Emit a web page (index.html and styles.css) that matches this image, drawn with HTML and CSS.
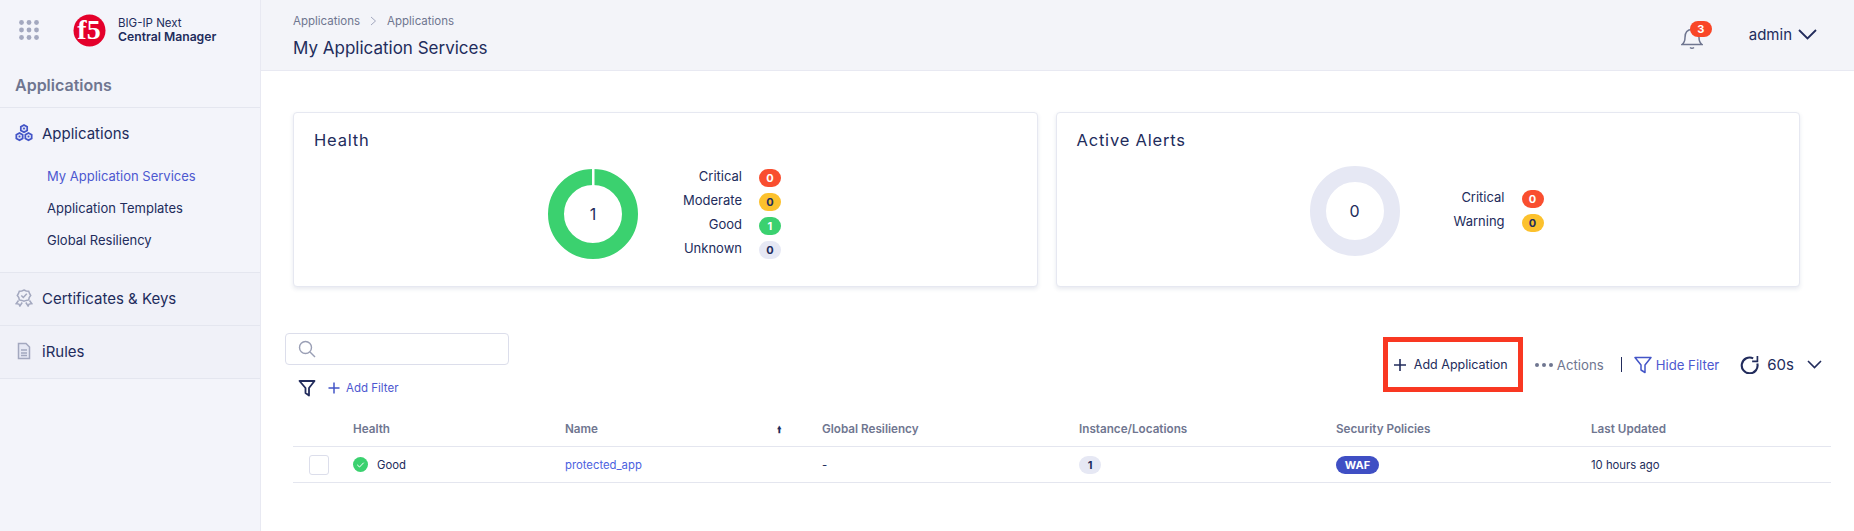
FILE: index.html
```html
<!DOCTYPE html>
<html lang="en">
<head>
  <meta charset="UTF-8" />
  <title>My Application Services</title>
  <link rel="stylesheet" href="styles.css">
</head>
<body>

  <div class="sidebar">
    <div class="brand">
      <svg class="apps-grid" width="20" height="20" viewBox="0 0 20 20">
        <g fill="#a3a8bf">
          <circle cx="2.500" cy="2.500" r="2.400"/><circle cx="10" cy="2.500" r="2.400"/><circle cx="17.500" cy="2.500" r="2.400"/>
          <circle cx="2.500" cy="10" r="2.400"/><circle cx="10" cy="10" r="2.400"/><circle cx="17.500" cy="10" r="2.400"/>
          <circle cx="2.500" cy="17.500" r="2.400"/><circle cx="10" cy="17.500" r="2.400"/><circle cx="17.500" cy="17.500" r="2.400"/>
        </g>
      </svg>
      <svg class="f5-logo" width="33" height="33" viewBox="0 0 33 33">
        <circle cx="16.500" cy="16.500" r="16" fill="#e4002b"/>
        <text x="16" y="25" text-anchor="middle" class="f5-text">f5</text>
      </svg>
      <div class="brand-name">
        <div class="brand-top">BIG-IP Next</div>
        <div class="brand-bottom">Central Manager</div>
      </div>
    </div>

    <div class="side-title">Applications</div>

    <div class="nav-group">
      <div class="nav-item">
        <svg width="18" height="18" viewBox="0 0 18 18" fill="#dfe2f5" stroke="#4355c7" stroke-width="1.700">
          <path d="M9 1l3.200 1.800v3.600L9 8.200 5.800 6.400V2.800z"/>
          <path d="M4.500 9l3.200 1.800v3.600L4.500 16.200 1.300 14.400v-3.600z"/>
          <path d="M13.500 9l3.200 1.800v3.600l-3.200 1.800-3.200-1.800v-3.600z"/>
          <circle cx="9" cy="4.600" r="1" fill="#4355c7" stroke="none"/>
          <circle cx="4.500" cy="12.600" r="1" fill="#4355c7" stroke="none"/>
          <circle cx="13.500" cy="12.600" r="1" fill="#4355c7" stroke="none"/>
        </svg>
        <span>Applications</span>
      </div>
      <a class="sub-item active">My Application Services</a>
      <a class="sub-item">Application Templates</a>
      <a class="sub-item">Global Resiliency</a>
    </div>

    <div class="nav-item nav-row">
      <svg width="18" height="18" viewBox="0 0 18 18" fill="none" stroke="#a3a8bf" stroke-width="1.500">
        <path d="M9 1l2.200 1 2.500.2.800 2.300 1.200 2-1.500 2-.5 2.400-2.500.5L9 12.300l-2.200-.9-2.500-.5-.5-2.400-1.500-2 1.200-2 .8-2.300 2.500-.2z"/>
        <path d="M6.300 6.500l2 2 3.500-3.800"/>
        <path d="M3.500 11.500l-2.300 3.200 2.700.4 1 1.900 2.300-3.500M14.500 11.500l2.300 3.200-2.700.4-1 1.900-2.300-3.500"/>
      </svg>
      <span>Certificates &amp; Keys</span>
    </div>

    <div class="nav-item nav-row">
      <svg width="18" height="18" viewBox="0 0 18 18" fill="#e6e8f4" stroke="#a3a8bf" stroke-width="1.500">
        <path d="M3.500 1.500h7.500l3.500 3.500v11.500h-11z"/>
        <path d="M6 8h6M6 11h6M6 13.500h6"/>
      </svg>
      <span>iRules</span>
    </div>
  </div>

  <div class="main">
    <div class="topbar">
      <div>
        <div class="crumbs">
          <span>Applications</span>
          <svg width="7" height="10" viewBox="0 0 7 10" fill="none" stroke="#a3a8bf" stroke-width="1"><path d="M1 1l4.500 4L1 9"/></svg>
          <span>Applications</span>
        </div>
        <h1>My Application Services</h1>
      </div>
      <div class="top-right">
        <div class="bell">
          <svg width="22" height="24" viewBox="0 0 22 24" fill="none" stroke="#6f7690" stroke-width="1.500">
            <path d="M1 18.500c2-1.500 3-3.500 3-7 0-5 2.500-8 7-8s7 3 7 8c0 3.500 1 5.500 3 7z"/>
            <path d="M9 21.500c1.200 1 2.800 1 4 0"/>
          </svg>
          <span class="bell-count">3</span>
        </div>
        <span class="user">admin</span>
        <svg class="user-arrow" width="19" height="11" viewBox="0 0 19 11" fill="none" stroke="#222c5c" stroke-width="1.800"><path d="M1 1l8.500 8.500L18 1"/></svg>
      </div>
    </div>

    <div class="content">
      <div class="cards">
        <div class="card">
          <div class="card-title">Health</div>
          <div class="chart chart-health">
            <div class="donut">
              <svg width="90" height="90" viewBox="0 0 90 90">
                <circle cx="45" cy="45" r="37" fill="none" stroke="#3bd16f" stroke-width="16"/>
                <rect x="44" y="0" width="2.500" height="17" fill="#fff"/>
              </svg>
              <span>1</span>
            </div>
            <div class="legend">
              <span>Critical</span><b class="badge red">0</b>
              <span>Moderate</span><b class="badge yellow">0</b>
              <span>Good</span><b class="badge green">1</b>
              <span>Unknown</span><b class="badge grey">0</b>
            </div>
          </div>
        </div>
        <div class="card">
          <div class="card-title">Active Alerts</div>
          <div class="chart chart-alerts">
            <div class="donut">
              <svg width="90" height="90" viewBox="0 0 90 90">
                <circle cx="45" cy="45" r="37" fill="none" stroke="#e6e8f4" stroke-width="16"/>
              </svg>
              <span>0</span>
            </div>
            <div class="legend">
              <span>Critical</span><b class="badge red">0</b>
              <span>Warning</span><b class="badge yellow">0</b>
            </div>
          </div>
        </div>
      </div>

      <div class="toolbar">
        <div class="filters">
          <div class="search">
            <svg width="18" height="18" viewBox="0 0 18 18" fill="none" stroke="#9a9fb5" stroke-width="1.400">
              <circle cx="7.500" cy="7.500" r="6"/><path d="M12 12l5 5"/>
            </svg>
          </div>
          <div class="filter-row">
            <svg width="18" height="18" viewBox="0 0 18 18" fill="none" stroke="#222c5c" stroke-width="1.800" stroke-linejoin="round">
              <path d="M1.500 2h15l-5.500 7v7.500L7.500 14V9z"/>
            </svg>
            <svg class="plus" width="12" height="12" viewBox="0 0 12 12" stroke="#4355c7" stroke-width="1.500"><path d="M6 0.500v11M0.500 6h11"/></svg>
            <span>Add Filter</span>
          </div>
        </div>

        <div class="actions">
          <div class="add-app">
            <svg width="14" height="14" viewBox="0 0 14 14" stroke="#222c5c" stroke-width="1.600"><path d="M7 1v12M1 7h12"/></svg>
            <span>Add Application</span>
          </div>
          <div class="dots"><i></i><i></i><i></i></div>
          <span class="action-grey">Actions</span>
          <span class="sep"></span>
          <svg width="18" height="18" viewBox="0 0 18 18" fill="none" stroke="#4355c7" stroke-width="1.500" stroke-linejoin="round">
            <path d="M1 1.500h16l-6 7.500v7.500L7 14V9z"/>
          </svg>
          <span class="action-blue">Hide Filter</span>
          <svg class="refresh" width="19" height="19" viewBox="0 0 18 18" fill="none" stroke="#222c5c" stroke-width="2">
            <path d="M12.500 3.200A7.500 7.500 0 1 0 16.400 8"/><path d="M16.500 1v5h-5" stroke-width="1.600"/>
          </svg>
          <span class="interval">60s</span>
          <svg width="15" height="9" viewBox="0 0 15 9" fill="none" stroke="#222c5c" stroke-width="1.600"><path d="M1 1l6.500 6.500L14 1"/></svg>
        </div>
      </div>

      <div class="table">
        <div class="tr th">
          <div></div>
          <div>Health</div>
          <div class="name-head">Name <span class="sort">&#129049;</span></div>
          <div>Global Resiliency</div>
          <div>Instance/Locations</div>
          <div>Security Policies</div>
          <div>Last Updated</div>
        </div>
        <div class="tr td">
          <div><span class="checkbox"></span></div>
          <div class="health-cell">
            <svg width="15" height="15" viewBox="0 0 15 15">
              <circle cx="7.500" cy="7.500" r="7.500" fill="#3bd16f"/>
              <path d="M4.200 7.800l2.300 2.200 4.200-4.300" fill="none" stroke="#fff" stroke-width="1"/>
            </svg>
            Good
          </div>
          <div><a class="app-link">protected_app</a></div>
          <div>-</div>
          <div><span class="count">1</span></div>
          <div><span class="waf">WAF</span></div>
          <div>10 hours ago</div>
        </div>
      </div>
    </div>
  </div>

</body>
</html>
```

FILE: styles.css
```css
* {
  box-sizing: border-box;
}

body {
  font-family: 'Inter', 'Liberation Sans', sans-serif;
  background-color: white;
  color: #222c5c;
  margin: 0;
  height: 531px;
  display: flex;
  overflow: hidden;
}

/* sidebar */

.sidebar {
  width: 261px;
  flex-shrink: 0;
  background-color: #f3f4fa;
  border-right: 1px solid #e8e9f2;
}

.brand {
  height: 60px;
  display: flex;
  align-items: center;
  padding-left: 19px;
}

.f5-logo {
  margin-left: 34px;
}

.f5-text {
  font-family: 'Liberation Serif', serif;
  font-size: 28px;
  font-weight: bold;
  fill: white;
}

.brand-name {
  margin-left: 12px;
  font-size: 11.500px;
  line-height: 14px;
}

.brand-bottom {
  font-weight: 600;
  font-size: 12.200px;
}

.side-title {
  height: 48px;
  padding: 15px 0 0 15px;
  font-size: 16px;
  font-weight: 600;
  color: #6f7690;
  border-bottom: 1px solid #e4e6ef;
}

.nav-group {
  height: 165px;
  border-bottom: 1px solid #e4e6ef;
}

.nav-item {
  display: flex;
  align-items: center;
  gap: 9px;
  height: 53px;
  padding: 0 0 2px 15px;
  font-size: 15px;
}

.nav-group .nav-item {
  height: 52px;
}

.nav-row {
  background-color: #f0f1f8;
  border-bottom: 1px solid #e4e6ef;
}

.sub-item {
  display: block;
  height: 32px;
  line-height: 32px;
  padding-left: 47px;
  font-size: 13px;
}

.sub-item.active {
  color: #4d58d0;
}

/* top bar */

.main {
  flex: 1;
  min-width: 0;
}

.topbar {
  height: 71px;
  background-color: #f3f4f9;
  border-bottom: 1px solid #e8e9f2;
  display: flex;
  justify-content: space-between;
  padding: 13px 37px 0 32px;
}

.crumbs {
  display: flex;
  align-items: center;
  gap: 10px;
  font-size: 11.500px;
  line-height: 16px;
  color: #6f7690;
}

h1 {
  font-size: 17px;
  font-weight: 400;
  line-height: 24px;
  margin: 7px 0 0 0;
}

.top-right {
  display: flex;
  align-items: center;
  height: 50px;
}

.bell {
  position: relative;
  width: 22px;
  height: 24px;
  margin-right: 46px;
}

.bell-count {
  position: absolute;
  top: -5px;
  left: 9px;
  width: 22px;
  height: 16px;
  border-radius: 8px;
  background-color: #f94627;
  color: white;
  font-size: 11px;
  font-weight: 700;
  line-height: 16px;
  text-align: center;
}

.user {
  font-size: 15px;
  margin: 0 6px 8px 0;
}

.user-arrow {
  margin-bottom: 8px;
}

/* cards */

.content {
  padding: 41px 23px 0 32px;
}

.cards {
  display: flex;
  gap: 18px;
  width: 1507px;
}

.card {
  flex: 1;
  height: 175px;
  background-color: white;
  border: 1px solid #e6e8f1;
  border-radius: 4px;
  box-shadow: 0 2px 4px rgba(60, 70, 120, 0.12);
  position: relative;
  padding: 16px 20px;
}

.card-title {
  font-size: 16.500px;
  letter-spacing: 0.8px;
  line-height: 22px;
}

.chart {
  position: absolute;
  display: flex;
  align-items: center;
}

.chart-health {
  left: 254px;
  top: 56px;
}

.chart-alerts {
  left: 253px;
  top: 53px;
}

.donut {
  position: relative;
  width: 90px;
  height: 90px;
}

.donut svg {
  display: block;
}

.donut span {
  position: absolute;
  inset: 0;
  text-align: center;
  line-height: 90px;
  font-size: 16px;
}

.legend {
  display: grid;
  grid-template-columns: auto 22px;
  column-gap: 17px;
  row-gap: 6px;
  font-size: 13px;
  line-height: 18px;
  text-align: right;
  margin-left: 45px;
}

.chart-alerts .legend {
  margin-left: 54px;
}

.legend span {
  margin-top: -2px;
}

.badge {
  height: 18px;
  border-radius: 9px;
  font-size: 11px;
  font-weight: 700;
  line-height: 18px;
  text-align: center;
}

.red {
  background-color: #f94e2f;
  color: white;
}

.yellow {
  background-color: #fcc12d;
  color: #222c5c;
}

.green {
  background-color: #3bd16f;
  color: white;
}

.grey {
  background-color: #e6e8f4;
  color: #222c5c;
}

/* toolbar */

.toolbar {
  display: flex;
  justify-content: space-between;
  margin-top: 46px;
}

.filters {
  margin-left: -8px;
}

.search {
  width: 224px;
  height: 32px;
  border: 1px solid #dcdeeb;
  border-radius: 4px;
  padding: 6px 12px;
}

.filter-row {
  display: flex;
  align-items: center;
  margin: 14px 0 0 13px;
  font-size: 11.500px;
  color: #4d58d0;
}

.plus {
  margin: 0 6px 0 12px;
}

.actions {
  display: flex;
  align-items: center;
  height: 55px;
  margin-top: 4px;
  font-size: 13px;
  padding-right: 9px;
}

.add-app {
  display: flex;
  align-items: center;
  gap: 7px;
  width: 140px;
  height: 55px;
  border: 5px solid #f93822;
  padding-left: 5px;
  margin-right: 12px;
  font-size: 12.500px;
  white-space: nowrap;
}

.dots {
  display: flex;
  gap: 3px;
  margin-right: 4px;
}

.dots i {
  width: 4px;
  height: 4px;
  border-radius: 50%;
  background-color: #6f7690;
}

.action-grey {
  color: #6f7690;
  font-size: 13.200px;
}

.sep {
  width: 1px;
  height: 15px;
  background-color: #222c5c;
  margin: 0 12px 0 17px;
}

.action-blue {
  color: #4d58d0;
  font-size: 13.200px;
  margin-left: 4px;
}

.refresh {
  margin-left: 21px;
}

.interval {
  font-size: 15px;
  margin: 0 13px 0 8px;
}

/* table */

.table {
  margin-top: 14px;
}

.tr {
  display: grid;
  grid-template-columns: 60px 212px 257px 257px 257px 255px 1fr;
  align-items: center;
  border-bottom: 1px solid #e4e6ef;
}

.th {
  height: 36px;
  font-size: 11.700px;
  font-weight: 600;
  color: #6f7690;
}

.td {
  height: 36px;
  font-size: 11.300px;
}

.name-head {
  position: relative;
}

.sort {
  position: absolute;
  left: 212px;
  top: 1px;
  font-family: 'DejaVu Sans', sans-serif;
  font-size: 9px;
  color: #222c5c;
}

.checkbox {
  display: block;
  width: 20px;
  height: 20px;
  margin-left: 16px;
  border: 1px solid #dcdeeb;
  border-radius: 3px;
}

.health-cell {
  display: flex;
  align-items: center;
  gap: 9px;
}

.app-link {
  color: #4d62e0;
}

.count {
  display: inline-block;
  width: 22px;
  height: 18px;
  border-radius: 9px;
  background-color: #e6e8f4;
  font-size: 11px;
  font-weight: 700;
  line-height: 18px;
  text-align: center;
}

.waf {
  display: inline-block;
  width: 43px;
  height: 18px;
  border-radius: 9px;
  background-color: #3f4fc4;
  color: white;
  font-size: 11px;
  font-weight: 700;
  line-height: 18px;
  text-align: center;
}
```
